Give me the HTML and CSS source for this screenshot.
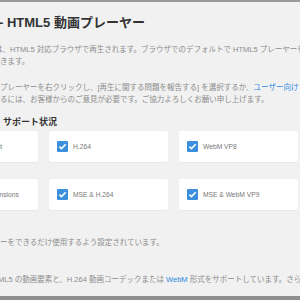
FILE: index.html
```html
<!DOCTYPE html>
<html lang="ja">
<head>
<meta charset="utf-8">
<link rel="stylesheet" href="styles.css">
</head>
<body>
<div class="topbar"></div>
<main class="page">
  <h1 class="title">- HTML5 動画プレーヤー</h1>
  <p class="text first">は、HTML5 対応ブラウザで再生されます。ブラウザでのデフォルトで HTML5 プレーヤーを使用<br><span class="flush">きます。</span></p>
  <p class="text second">プレーヤーを右クリックし、[再生に関する問題を報告する] を選択するか、<a class="link">ユーザー向けフォーラム</a><br>るには、お客様からのご意見が必要です。ご協力よろしくお願い申し上げます。</p>
  <h2 class="heading">サポート状況</h2>
  <div class="grid">
    <div class="card"><span class="check"><svg viewBox="0 0 11 11" width="11" height="11"><path d="M2.4 5.6 L4.5 7.6 L8.7 3.2" fill="none" stroke="#fff" stroke-width="1.5"/></svg></span><span class="label">HTMLVideoElement</span></div>
    <div class="card"><span class="check"><svg viewBox="0 0 11 11" width="11" height="11"><path d="M2.4 5.6 L4.5 7.6 L8.7 3.2" fill="none" stroke="#fff" stroke-width="1.5"/></svg></span><span class="label">H.264</span></div>
    <div class="card"><span class="check"><svg viewBox="0 0 11 11" width="11" height="11"><path d="M2.4 5.6 L4.5 7.6 L8.7 3.2" fill="none" stroke="#fff" stroke-width="1.5"/></svg></span><span class="label">WebM VP8</span></div>
    <div class="card"><span class="check"><svg viewBox="0 0 11 11" width="11" height="11"><path d="M2.4 5.6 L4.5 7.6 L8.7 3.2" fill="none" stroke="#fff" stroke-width="1.5"/></svg></span><span class="label">Media Source Extensions</span></div>
    <div class="card"><span class="check"><svg viewBox="0 0 11 11" width="11" height="11"><path d="M2.4 5.6 L4.5 7.6 L8.7 3.2" fill="none" stroke="#fff" stroke-width="1.5"/></svg></span><span class="label">MSE &amp; H.264</span></div>
    <div class="card"><span class="check"><svg viewBox="0 0 11 11" width="11" height="11"><path d="M2.4 5.6 L4.5 7.6 L8.7 3.2" fill="none" stroke="#fff" stroke-width="1.5"/></svg></span><span class="label">MSE &amp; WebM VP9</span></div>
  </div>
  <p class="text third">ーをできるだけ使用するよう設定されています。</p>
  <p class="text fourth">ML5 の動画要素と、H.264 動画コーデックまたは <a class="link">WebM</a> 形式をサポートしています。さらに</p>
</main>
<div class="bottombar"></div>
</body>
</html>
```

FILE: styles.css
```css
html, body {
  margin: 0;
  padding: 0;
}
body {
  width: 300px;
  height: 300px;
  overflow: hidden;
  background: #f1f1f1;
  font-family: "Liberation Sans", "Noto Sans CJK JP", sans-serif;
  color: #888;
  display: flex;
  flex-direction: column;
}
.topbar {
  height: 2px;
  background: #9a9a9a;
  flex: none;
}
.page {
  flex: 1;
  white-space: nowrap;
}
.title {
  margin: 13px 0 0 -1px;
  font-size: 13px;
  line-height: 16px;
  font-weight: bold;
  color: #333;
}
.text {
  margin: 0;
  font-size: 7.5px;
  line-height: 12px;
  color: #8c8c8c;
}
.first {
  margin-top: 13px;
  margin-left: -5px;
}
.flush {
  margin-left: 5px;
}
.second {
  margin-top: 14px;
}
.link {
  color: #2a8ae0;
}
.heading {
  margin: 10px 0 0 3px;
  font-size: 9px;
  line-height: 12px;
  font-weight: bold;
  color: #333;
}
.grid {
  margin: 3px 0 0 -81px;
  display: grid;
  grid-template-columns: repeat(3, 119px);
  grid-auto-rows: 31px;
  column-gap: 11px;
  row-gap: 17px;
}
.card {
  background: #fff;
  border-radius: 2px;
  box-shadow: 0 1px 1px rgba(0, 0, 0, 0.04);
  display: flex;
  align-items: center;
  padding-left: 8px;
  gap: 5px;
}
.check {
  width: 11px;
  height: 11px;
  background: #3b8fdc;
  border-radius: 1px;
  display: flex;
  flex: none;
}
.label {
  font-size: 6.7px;
  color: #777;
}
.third {
  margin-top: 27px;
}
.fourth {
  margin-top: 25px;
  margin-left: -2px;
}
.bottombar {
  height: 4px;
  background: #8f8f8f;
  flex: none;
}
```
